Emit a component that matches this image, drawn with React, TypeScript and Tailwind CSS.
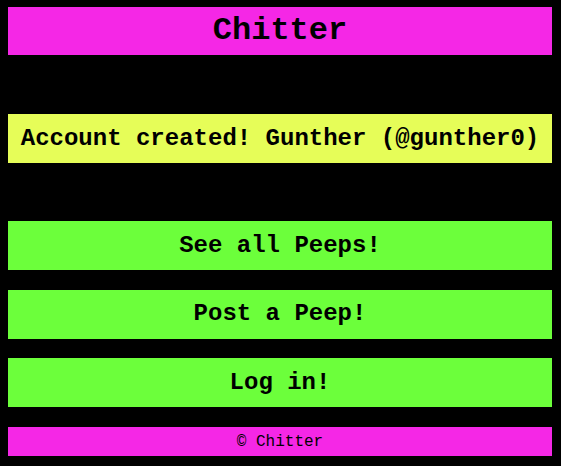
export default function App() {
  const mono = { fontFamily: '"Liberation Mono", "DejaVu Sans Mono", monospace' };

  return (
    <div className="min-h-screen bg-black pt-[7px] pl-2 text-black" style={mono}>
      <div className="w-[544px]">
        {/* Header */}
        <header className="flex h-[48px] items-center justify-center bg-[#f527e6]">
          <h1 className="text-[32px] font-bold leading-none">Chitter</h1>
        </header>

        {/* Flash message */}
        <div className="mt-[59px] flex h-[49px] items-center justify-center bg-[#e6fd58]">
          <p className="text-[24px] font-bold leading-none">Account created! Gunther (@gunther0)</p>
        </div>

        {/* Nav buttons */}
        <nav className="mt-[58px] flex flex-col gap-[19.5px]">
          <button className="flex h-[49px] items-center justify-center bg-[#6cff3b] text-[24px] font-bold leading-none">
            See all Peeps!
          </button>
          <button className="flex h-[49px] items-center justify-center bg-[#6cff3b] text-[24px] font-bold leading-none">
            Post a Peep!
          </button>
          <button className="flex h-[49px] items-center justify-center bg-[#6cff3b] text-[24px] font-bold leading-none">
            Log in!
          </button>
        </nav>

        {/* Footer */}
        <footer className="mt-[20px] flex h-[29px] items-center justify-center bg-[#f527e6]">
          <span className="text-[16px] leading-none">© Chitter</span>
        </footer>
      </div>
    </div>
  );
}
